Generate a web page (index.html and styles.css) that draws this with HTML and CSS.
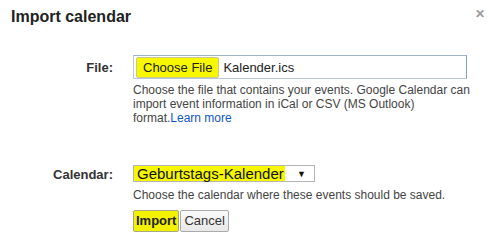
FILE: index.html
```html
<!DOCTYPE html>
<html lang="en">
<head>
  <meta charset="UTF-8" />
  <title>Import calendar</title>
  <link rel="stylesheet" href="styles.css">
</head>
<body>
  <div class="dialog">
    <div class="dialog-head">
      <div class="dialog-title">Import calendar</div>
      <span class="close">&#x2715;</span>
    </div>

    <div class="row row-file">
      <div class="label label-file">File:</div>
      <div class="field">
        <div class="file-box">
          <span class="btn btn-choose">Choose File</span>
          <span class="file-name">Kalender.ics</span>
        </div>
        <div class="help help-file">Choose the file that contains your events. Google Calendar can import event information in iCal or CSV (MS Outlook) format.<a href="#">Learn more</a></div>
      </div>
    </div>

    <div class="row row-cal">
      <div class="label label-cal">Calendar:</div>
      <div class="field">
        <div class="select">
          <span class="select-value">Geburtstags-Kalender</span>
          <span class="select-arrow">&#9660;</span>
        </div>
        <div class="help help-cal">Choose the calendar where these events should be saved.</div>
        <div class="actions">
          <span class="btn btn-import">Import</span>
          <span class="btn btn-cancel">Cancel</span>
        </div>
      </div>
    </div>
  </div>
</body>
</html>
```

FILE: styles.css
```css
* { box-sizing: border-box; }
html, body {
  margin: 0;
  padding: 0;
  background: #fff;
  font-family: "Liberation Sans", Arial, sans-serif;
  color: #333;
  overflow: hidden;
}

.dialog {
  width: 492px;
  height: 245px;
  padding: 7px 7px 0 11px;
}

.dialog-head {
  display: flex;
  justify-content: space-between;
  align-items: flex-start;
}
.dialog-title {
  font-size: 16px;
  font-weight: bold;
  color: #222;
  line-height: 20px;
}
.close {
  font-size: 12px;
  font-weight: bold;
  color: #999;
  margin-top: 0;
}

/* 폼 영역 */
.row {
  display: flex;
  align-items: flex-start;
}
.row-file { margin-top: 28px; }
.row-cal { margin-top: 40px; }

.label {
  width: 102px;
  margin-right: 20px;
  flex-shrink: 0;
  text-align: right;
  font-size: 13px;
  font-weight: bold;
  color: #333;
}
.label-file { padding-top: 5px; }
.label-cal { padding-top: 2px; }

.field { min-width: 0; }

.file-box {
  width: 334px;
  height: 24px;
  border: 1px solid #b9c8dc;
  border-top-color: #9fb2cc;
  border-right-color: #7d9dc6;
  display: flex;
  align-items: center;
  padding-left: 2px;
}
.btn {
  display: inline-block;
  font-size: 13px;
  border: 1px solid #aaa;
  border-radius: 2px;
  color: #222;
}
.btn-choose {
  background: #f7f700;
  padding: 2px 6px;
  line-height: 15px;
  border-color: #c8c890;
}
.file-name {
  font-size: 13px;
  color: #222;
  margin-left: 4px;
}

.help {
  font-size: 12px;
  line-height: 14px;
  color: #444;
}
.help-file { margin-top: 4px; }
.help a {
  color: #1155cc;
  text-decoration: none;
}

.select {
  width: 182px;
  height: 17px;
  border: 1px solid #b5b5b5;
  display: flex;
  align-items: center;
  justify-content: space-between;
  font-size: 15px;
  color: #111;
}
.select-value {
  background: #f7f700;
  height: 100%;
  width: 151px;
  padding-left: 3px;
  line-height: 15px;
}
.select-arrow {
  font-size: 9px;
  margin-right: 8px;
  color: #111;
}
.help-cal { margin-top: 6px; }

.actions {
  display: flex;
  margin-top: 8px;
}
.btn-import {
  background: #f2f200;
  font-weight: bold;
  padding: 2px 2px;
  line-height: 16px;
  border-color: #a8a880;
}
.btn-cancel {
  background: linear-gradient(#fafafa, #e8e8e8);
  padding: 2px 3px;
  line-height: 16px;
  margin-left: 1px;
  color: #333;
}
```
